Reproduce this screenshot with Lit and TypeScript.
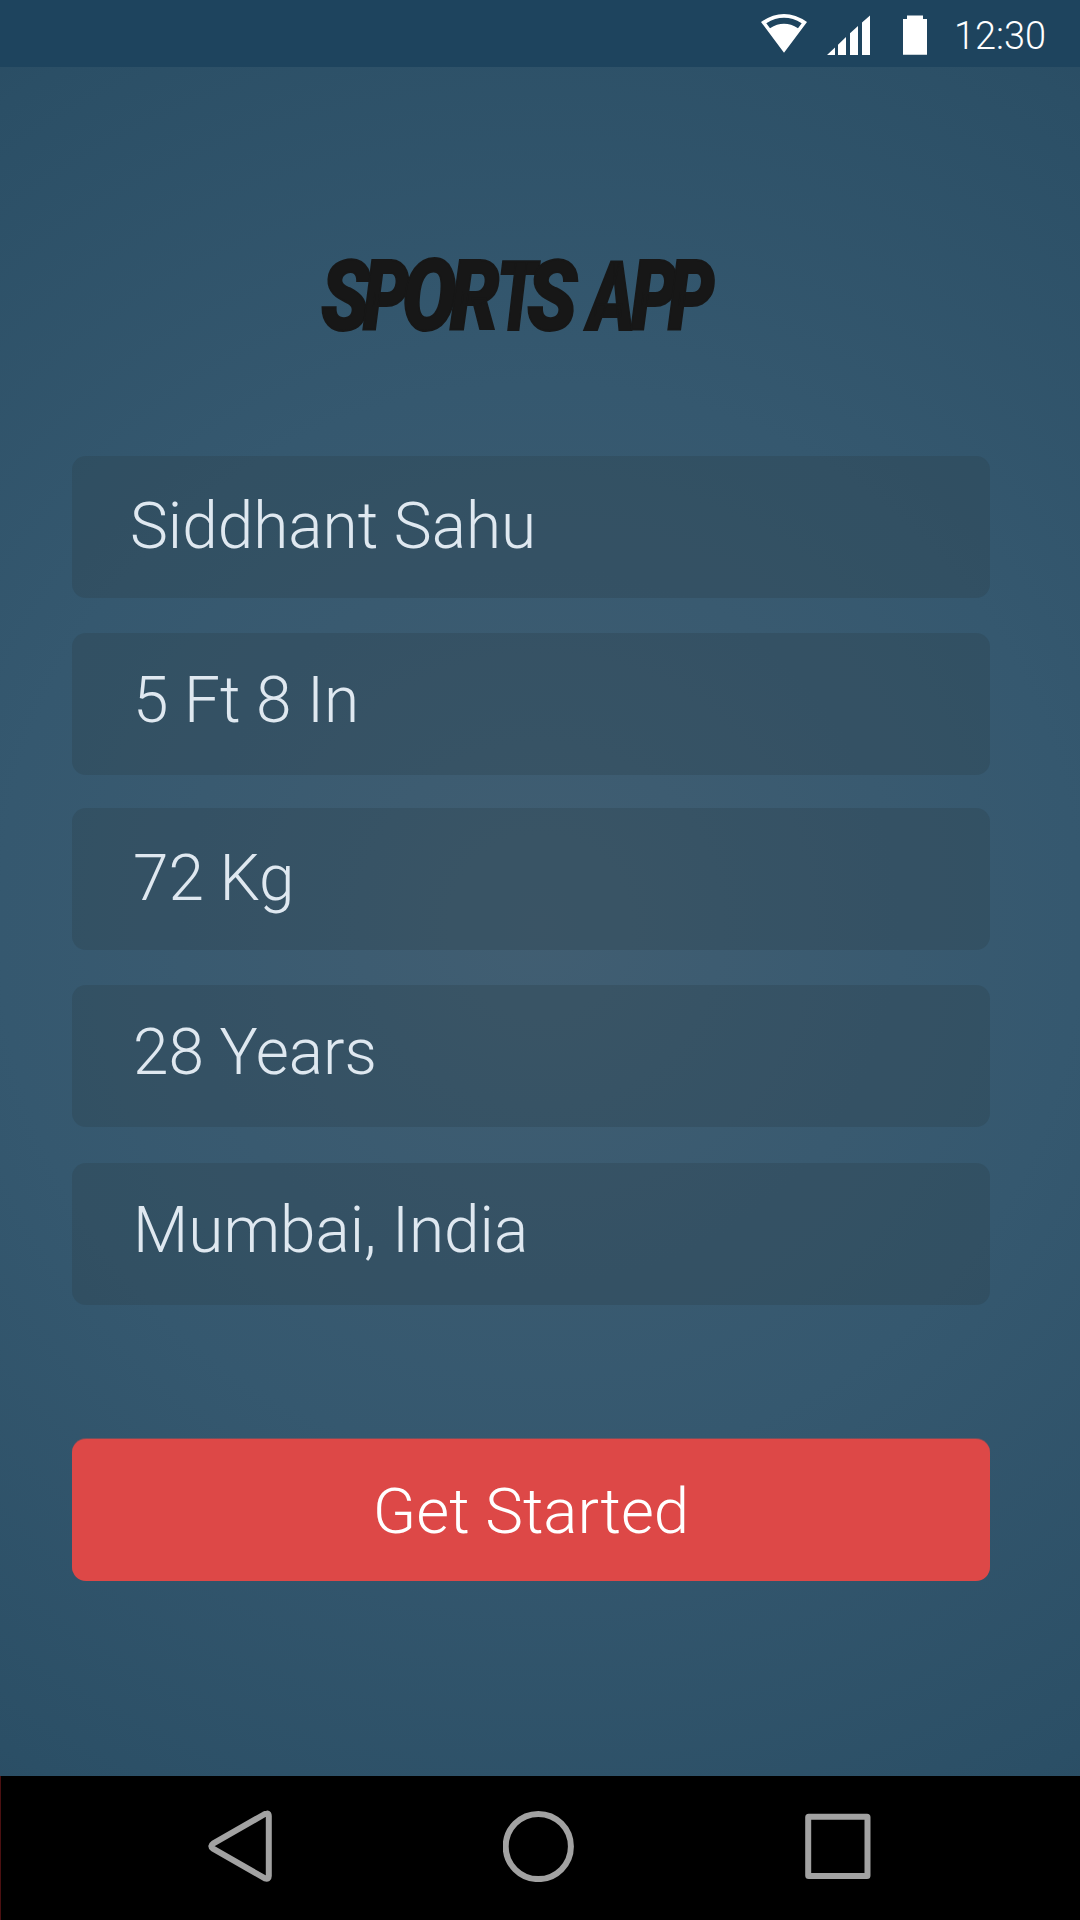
import { LitElement, html, css } from "lit";
import { customElement } from "lit/decorators.js";
import { styleMap } from "lit/directives/style-map.js";

interface Field {
  value: string;
  style: string;
}

const FIELDS: Field[] = [
  { value: "Siddhant Sahu", style: "name" },
  { value: "5 Ft 8 In", style: "height" },
  { value: "72 Kg", style: "weight" },
  { value: "28 Years", style: "age" },
  { value: "Mumbai, India", style: "city" },
];

// Letter, advance in pixels, horizontal and vertical stretch.
type Letter = [string, number, number, number];

const TITLE: Letter[] = [
  ["S", 42.5, 0.82, 1],
  ["P", 38.5, 0.74, 1],
  ["O", 48, 0.83, 1.01],
  ["R", 47, 0.8, 1],
  ["T", 30, 0.66, 0.98],
  ["S", 44.5, 0.84, 1],
  [" ", 17, 1, 1],
  ["A", 43, 0.73, 0.99],
  ["P", 37, 0.75, 1],
  ["P", 46, 0.75, 1],
];

@customElement("status-bar")
class StatusBar extends LitElement {
  static styles = css`
    :host {
      display: flex;
      align-items: flex-start;
      justify-content: flex-end;
      box-sizing: border-box;
      height: 67px;
      padding-right: 34px;
      background: #1e445e;
      color: #fff;
    }
    svg { display: block; fill: currentColor; }
    .wifi { margin: 13px 19px 0 0; }
    .signal { margin: 15px 33px 0 0; }
    .battery { margin: 15px 27px 0 0; }
    .time {
      font: 300 37.9px/67px Roboto, sans-serif;
      padding-top: 3px;
    }
  `;

  render() {
    return html`
      <svg class="wifi" width="48" height="40" viewBox="760 13 48 40">
        <path fill-rule="evenodd" d="M761 22Q784 6 807 22L784 52.7ZM766.3 23.2Q784 12.5 801.7 23.2L798 28.2Q784 19.5 770 28.2Z"/>
      </svg>
      <svg class="signal" width="43" height="40" viewBox="827 15 43 40">
        <path d="M827 55L835 47.5V55ZM838 55V44.7L846 37V55ZM850 55V33.3L858 26V55ZM862 55V22.5L870 15.5V55Z"/>
      </svg>
      <svg class="battery" width="24" height="40" viewBox="0 0 24 40">
        <path d="M4 0.4H20V4H24V39.8H0V4H4Z"/>
      </svg>
      <span class="time">12:30</span>
    `;
  }
}

@customElement("nav-bar")
class NavBar extends LitElement {
  static styles = css`
    :host {
      display: flex;
      align-items: center;
      box-sizing: border-box;
      height: 144px;
      padding: 0 209px 4px 207px;
      background: #000;
      border-left: 1px solid #4b1011;
      justify-content: space-between;
    }
    svg { display: block; fill: none; stroke: #a2a2a2; stroke-width: 6; }
  `;

  render() {
    return html`
      <svg width="64" height="72" viewBox="208 1810 64 72">
        <path stroke-linejoin="round" d="M267 1813.5Q268.8 1813.2 268.8 1816V1876Q268.8 1879.6 265 1878.4L213 1848.7Q209.5 1846 213 1843.7L264 1814.5Q265.5 1813.4 267 1813.5Z"/>
      </svg>
      <svg width="72" height="72" viewBox="0.7 0 72 72">
        <circle cx="36" cy="36.5" r="32.6"/>
      </svg>
      <svg width="66" height="66" viewBox="0 0 66 66">
        <rect x="3.2" y="3.7" width="59.3" height="59.3" rx="0.5" stroke-linejoin="round"/>
      </svg>
    `;
  }
}

@customElement("app-root")
class AppRoot extends LitElement {
  static styles = css`
    :host {
      display: flex;
      flex-direction: column;
      width: 1080px;
      height: 1920px;
      overflow: hidden;
      background: radial-gradient(circle at 540px 925px, #415e72 0, #35586f 540px, #2b4f66 980px, #294b62 1100px);
      font-family: Roboto, sans-serif;
    }
    .content {
      flex: 1;
      display: flex;
      flex-direction: column;
      padding: 0 90px 0 72px;
    }
    .title {
      display: flex;
      height: 110px;
      margin: 175px 0 0 248.5px;
      font: italic 900 98px/110px Roboto, sans-serif;
      color: #171717;
      -webkit-text-stroke: 2px #171717;
    }
    .letter {
      flex: none;
      white-space: pre;
      transform-origin: 0 88px;
    }
    .fields {
      display: flex;
      flex-direction: column;
      gap: 35px;
      margin-top: 104px;
    }
    .field, .start {
      display: block;
      box-sizing: border-box;
      height: 142px;
      border: 0;
      border-radius: 14px;
      font: 300 63.9px/142px Roboto, sans-serif;
      white-space: nowrap;
    }
    .field {
      background: rgba(44, 63, 74, 0.3);
      color: #dfe8f0;
      padding-left: 61px;
    }
    .name { padding-left: 58px; }
    .height, .age, .city { line-height: 136px; }
    .weight { margin-top: -2px; }
    .city { margin-top: 1px; }
    .start {
      margin-top: 134px;
      background: #dd4847;
      box-shadow: 0 -1px rgba(221, 72, 71, 0.4);
      color: #fff;
      padding: 2px 0 0;
      font-size: 63.6px;
      text-align: center;
    }
  `;

  render() {
    return html`
      <status-bar></status-bar>
      <main class="content">
        <div class="title">${TITLE.map(([glyph, advance, sx, sy]) => html`<span
          class="letter"
          style=${styleMap({ width: `${advance}px`, transform: `scale(${sx}, ${sy})` })}
        >${glyph}</span>`)}</div>
        <div class="fields">
          ${FIELDS.map((f) => html`<div class="field ${f.style}">${f.value}</div>`)}
        </div>
        <button class="start">Get Started</button>
      </main>
      <nav-bar></nav-bar>
    `;
  }
}
